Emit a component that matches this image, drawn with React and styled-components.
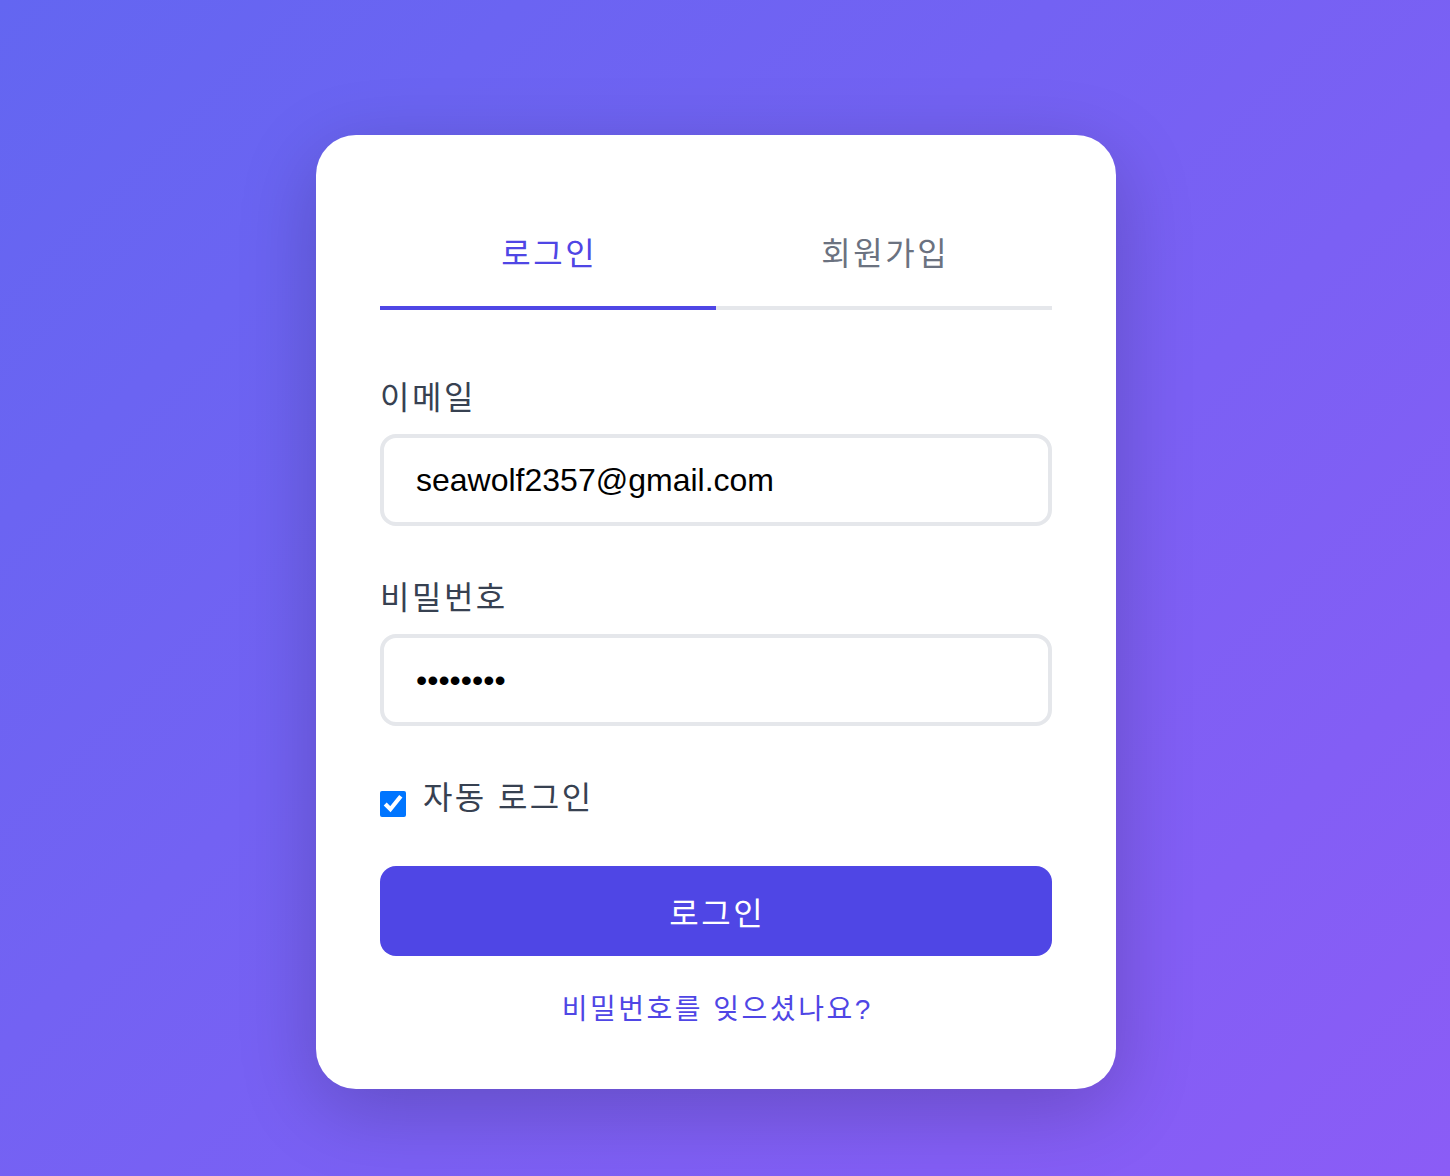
import React, { useState } from 'react';
import styled, { createGlobalStyle } from 'styled-components';

const GlobalStyle = createGlobalStyle`
  * { box-sizing: border-box; }
  body {
    margin: 0;
    font-family: "Liberation Sans", "Noto Sans CJK KR", sans-serif;
  }
`;

const Page = styled.div`
  min-height: 1176px;
  display: flex;
  justify-content: center;
  align-items: flex-start;
  padding: 135px 18px 0 0;
  background: linear-gradient(135deg, #6366f1 0%, #8b5cf6 100%);
`;

const Card = styled.div`
  width: 800px;
  background: #ffffff;
  border-radius: 40px;
  padding: 64px 64px 59px;
  box-shadow: 0 20px 80px rgba(0, 0, 0, 0.2);
`;

const Tabs = styled.div`
  display: flex;
  margin-bottom: 64px;
`;

const Tab = styled.button`
  flex: 1;
  background: none;
  border: none;
  border-bottom: 4px solid ${(p) => (p.active ? '#4f46e5' : '#e5e7eb')};
  padding: 31px 0 28px;
  font-family: "Liberation Sans", "Noto Sans CJK KR", sans-serif;
  font-size: 32px;
  line-height: 48px;
  letter-spacing: 2.5px;
  text-indent: 2.5px;
  color: ${(p) => (p.active ? '#4f46e5' : '#6b7280')};
  cursor: pointer;
`;

const Field = styled.div`
  margin-bottom: 48px;
`;

const Label = styled.label`
  display: block;
  font-size: 32px;
  line-height: 48px;
  letter-spacing: 2.5px;
  color: #374151;
  margin-bottom: 12px;
`;

const Input = styled.input`
  display: block;
  width: 100%;
  height: 92px;
  padding: 0 32px;
  border: 4px solid #e5e7eb;
  border-radius: 16px;
  font-family: "Liberation Sans", "Noto Sans CJK KR", sans-serif;
  font-size: 32px;
  color: #000000;
  outline: none;
  background: #fff;
`;

const CheckRow = styled.label`
  display: flex;
  align-items: center;
  font-size: 32px;
  line-height: 48px;
  letter-spacing: 2.4px;
  color: #374151;
  margin-bottom: 44px;
  cursor: pointer;
`;

const Check = styled.input`
  width: 26px;
  height: 26px;
  margin: 12px 17px 0 0;
`;

const SubmitButton = styled.button`
  display: block;
  width: 100%;
  height: 90px;
  border: none;
  border-radius: 16px;
  background: #4f46e5;
  color: #ffffff;
  font-family: "Liberation Sans", "Noto Sans CJK KR", sans-serif;
  font-size: 32px;
  letter-spacing: 2.5px;
  text-indent: 2.5px;
  cursor: pointer;
`;

const Forgot = styled.a`
  display: block;
  margin-top: 34px;
  text-align: center;
  font-size: 28px;
  line-height: 40px;
  letter-spacing: 2.5px;
  text-indent: 2.5px;
  color: #4f46e5;
  text-decoration: none;
  cursor: pointer;
`;

export default function App() {
  const [tab, setTab] = useState('login');
  const [email, setEmail] = useState('seawolf2357@gmail.com');
  const [password, setPassword] = useState('12345678');
  const [remember, setRemember] = useState(true);

  return (
    <>
      <GlobalStyle />
      <Page>
        <Card>
          <Tabs>
            <Tab active={tab === 'login'} onClick={() => setTab('login')}>로그인</Tab>
            <Tab active={tab === 'signup'} onClick={() => setTab('signup')}>회원가입</Tab>
          </Tabs>

          <Field>
            <Label htmlFor="email">이메일</Label>
            <Input id="email" type="email" value={email} onChange={(e) => setEmail(e.target.value)} />
          </Field>

          <Field>
            <Label htmlFor="password">비밀번호</Label>
            <Input id="password" type="password" value={password} onChange={(e) => setPassword(e.target.value)} />
          </Field>

          <CheckRow>
            <Check type="checkbox" checked={remember} onChange={(e) => setRemember(e.target.checked)} />
            자동 로그인
          </CheckRow>

          <SubmitButton>로그인</SubmitButton>
          <Forgot>비밀번호를 잊으셨나요?</Forgot>
        </Card>
      </Page>
    </>
  );
}
